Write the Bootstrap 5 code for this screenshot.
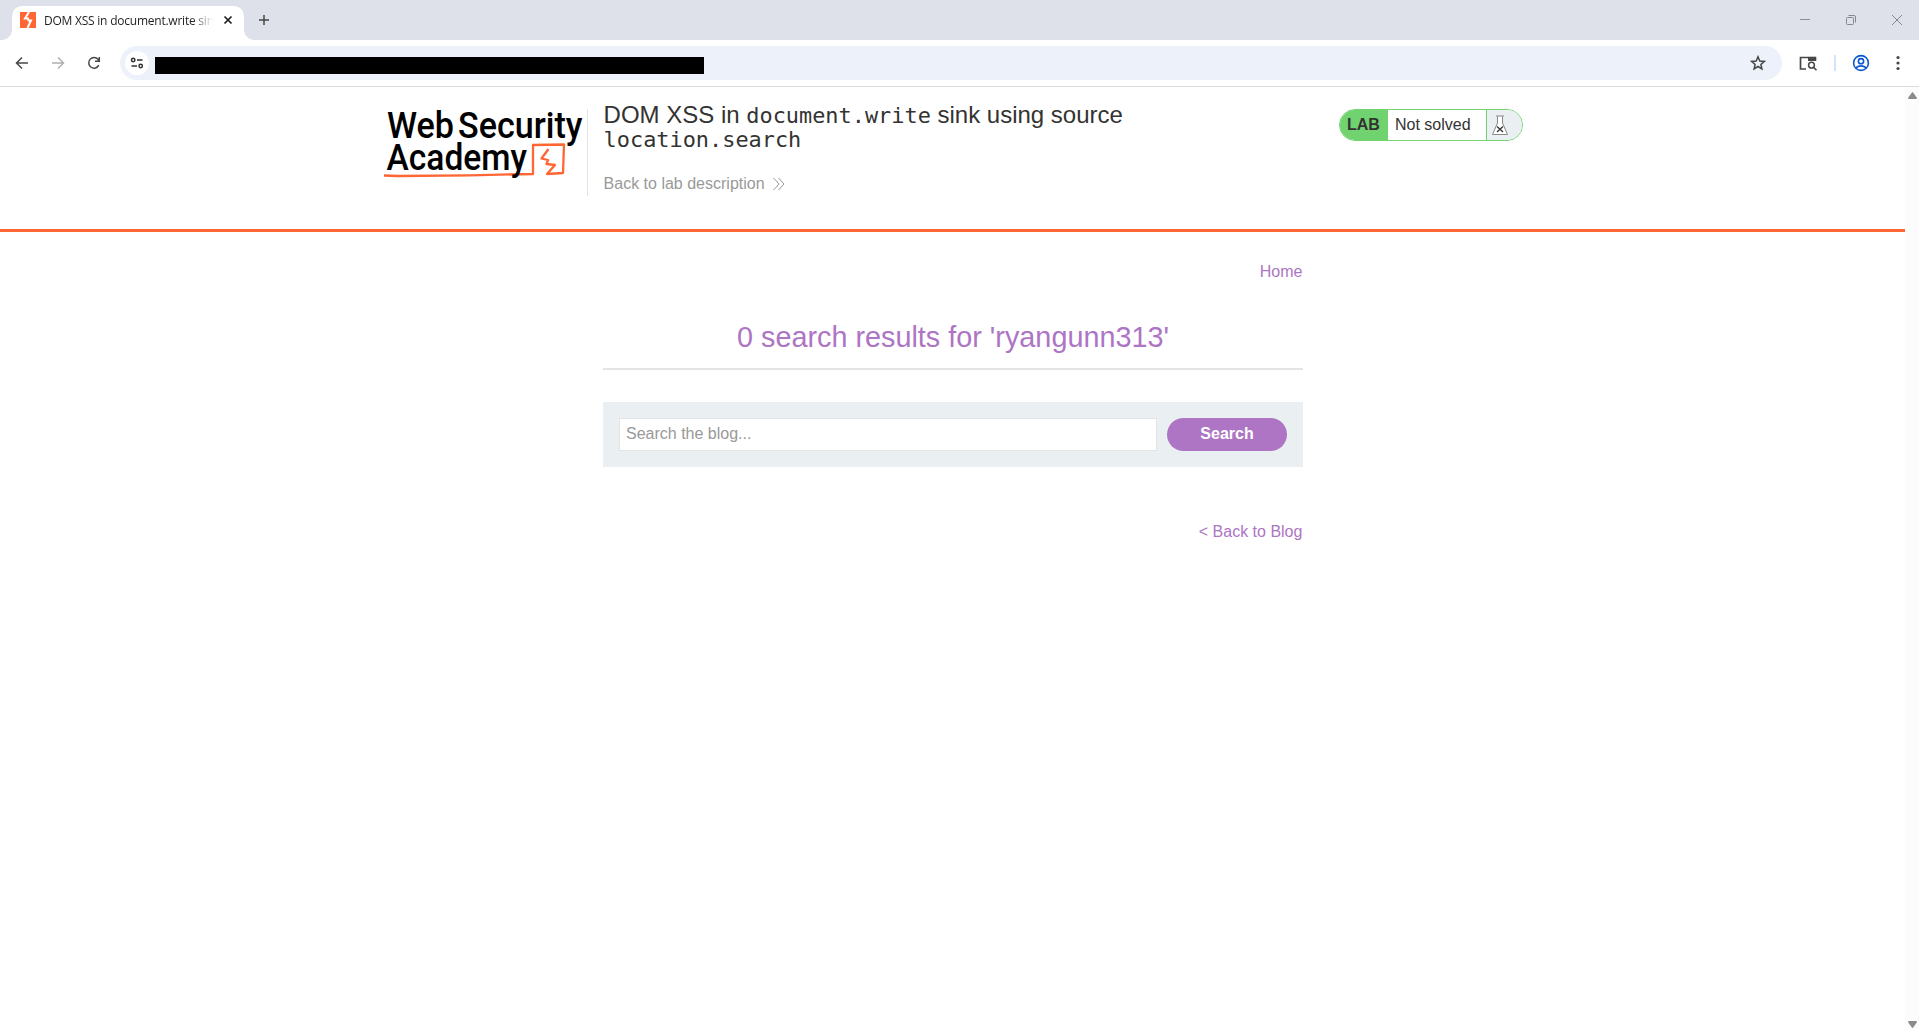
<!DOCTYPE html>
<html lang="en">
<head>
<meta charset="utf-8">
<title>DOM XSS in document.write sink using source location.search</title>
<link href="https://cdn.jsdelivr.net/npm/bootstrap@5.3.0/dist/css/bootstrap.min.css" rel="stylesheet">
<style>
body{font-family:"Liberation Sans",Arial,sans-serif;font-size:16px;line-height:24px;color:#333332;background:#fff;height:1029px}
svg{display:block;flex:none}
.tabstrip{height:40px;background:#dee1e9;padding:6px 0 0 12px}
.browser-tab{width:232px;height:34px;background:#fff;border-radius:10px 10px 0 0;padding:0 10px 6px 8px}
.browser-tab::before,.browser-tab::after{content:"";position:absolute;bottom:0;width:10px;height:10px}
.browser-tab::before{left:-10px;background:radial-gradient(circle at 0 0,transparent 9.5px,#fff 10px)}
.browser-tab::after{right:-10px;background:radial-gradient(circle at 100% 0,transparent 9.5px,#fff 10px)}
.tab-title{font:12px/18px "Open Sans","Noto Sans",sans-serif;letter-spacing:-.23px;color:#1f1f1f;width:169px;margin-left:8px;padding-top:1px;-webkit-mask-image:linear-gradient(90deg,#000 148px,transparent 169px);mask-image:linear-gradient(90deg,#000 148px,transparent 169px)}
.new-tab{margin:8px 0 0 14px}
.window-controls{gap:34px;padding:8px 16px 0 0}
.toolbar{height:47px;border-bottom:1px solid #dcdcdc;padding:0 13px 1px 14px}
.nav-buttons{gap:20px;width:106px}
.omnibox{height:34px;width:1662px;border-radius:17px;background:#ecf1fa;padding:0 16px 0 5px}
.site-info{width:24px;height:24px;background:#fff}
.address-text{width:549px;height:17px;background:#000;margin:5px 0 0 6px;align-self:center}
.viewport{height:942px}
.scroll-track{width:14px;background:#fcfcfc;padding:5px 2px 1px 3px}
.lab-header{height:145px;border-bottom:3px solid #ff6633;padding:15px 0 0 380px}
.brand-logo{width:208px;height:87px;border-right:1px solid #e4e4e4;margin-top:7px}
.brand-logo svg{overflow:visible}
.brand-logo text{font-family:Roboto,sans-serif;font-weight:500;font-size:37.5px;fill:#000}
.lab-title{width:560px;margin-left:15.6px;padding-top:1px}
.lab-title h2{font-size:24px;line-height:24px;margin:0 0 20.500px;font-weight:400;white-space:nowrap}
.lab-title code{font:21.9px/20px "DejaVu Sans Mono",monospace;color:inherit}
.back-lab{color:#999;gap:7px}
.lab-status{height:32px;width:184px;margin:7px 0 0 175.4px;border:1px solid #72d572;border-radius:16px;overflow:hidden;line-height:30px}
.status-tag{width:48px;background:#70d36f;font-weight:700;padding-left:7px}
.status-value{width:99px;padding-left:7px;border-right:1px solid #70d36f}
.status-flask{background:#eaeff2;padding:5px 0 0 4px}
.blog-section{width:700px;margin-left:603px;padding-top:28px}
.blog-section a,.blog-section h1{color:#ad75c3;text-decoration:none}
.blog-nav{padding-right:.6px}
.blog-section h1{font-size:28.8px;line-height:34px;font-weight:400;text-align:center;margin:36px 0 0;padding-bottom:14px;border-bottom:2px solid #e4e4e4}
.search-panel{height:65px;margin-top:32px;padding:0 16px;background:#eaeff2;gap:10px}
.search-panel .form-control{height:33px;width:538px;flex:none;border:1px solid #e4e4e4;border-radius:0;padding:0 6px 2px;font-size:16px}
.search-panel .form-control::placeholder{color:#999;opacity:1}
.search-panel .btn{height:33px;width:120px;border-radius:17px;background:#ad75c3;color:#fff;font-weight:700;padding:0 0 2px;border:0}
.back-link{margin-top:53px}
</style>
<script src="https://cdn.jsdelivr.net/npm/bootstrap@5.3.0/dist/js/bootstrap.bundle.min.js"></script>
</head>
<body class="overflow-hidden d-flex flex-column">
<div class="tabstrip d-flex">
  <div class="browser-tab d-flex align-items-center position-relative">
    <svg width="16" height="16" viewBox="0 0 16 16"><path fill="#f63" d="M0 0h16v16H0z"/><path d="M9 0L5 6.500H8L8.500 8.500H11L7.500 16" fill="none" stroke="#fff" stroke-width="2"/></svg>
    <div class="tab-title text-nowrap overflow-hidden">DOM XSS in document.write sink</div>
    <svg class="ms-auto" width="12" height="12" viewBox="0 0 12 12"><path d="M2.500 2.500l7 7m0-7l-7 7" stroke="#1f1f1f" stroke-width="1.700"/></svg>
  </div>
  <svg class="new-tab" width="12" height="12" viewBox="0 0 12 12"><path d="M6 1v10M1 6h10" stroke="#474747" stroke-width="1.500"/></svg>
  <div class="window-controls d-flex ms-auto">
    <svg width="12" height="12"><path d="M1 5.500h10" stroke="#8c8e92"/></svg>
    <svg width="12" height="12" fill="none" stroke="#85878b"><rect x="1.500" y="3.500" width="7" height="7" rx="1"/><path d="M3.500 1.500H9q1.500 0 1.500 1.500V8.500"/></svg>
    <svg width="12" height="12"><path d="M1 1l10 10M11 1L1 11" stroke="#85878b"/></svg>
  </div>
</div>
<div class="toolbar d-flex align-items-center bg-white">
  <div class="nav-buttons d-flex">
    <svg width="16" height="16" fill="none" stroke="#474747" stroke-width="1.500"><path d="M14 8H3M8 2.500L2.500 8L8 13.500"/></svg>
    <svg width="16" height="16" fill="none" stroke="#b0b0b0" stroke-width="1.500"><path d="M2 8h11M8 2.500L13.500 8L8 13.500"/></svg>
    <svg width="16" height="16" fill="none" stroke="#474747" stroke-width="1.500"><path d="M12.800 10.200A5.300 5.300 0 1 1 12 4.300L13.300 6M13.300 2V6.200H9"/></svg>
  </div>
  <div class="omnibox d-flex align-items-center">
    <div class="site-info rounded-circle d-flex align-items-center justify-content-center"><svg width="14" height="12" fill="none" stroke="#303030" stroke-width="1.500"><circle cx="3.200" cy="3" r="1.700"/><path d="M7 3h5.500M1.500 9H7"/><circle cx="10.700" cy="9" r="1.700"/></svg></div>
    <div class="address-text"></div>
    <svg class="ms-auto" width="16" height="16" fill="none" stroke="#474747" stroke-width="1.500"><path d="M8 1.800L9.800 6L14.300 6.400L10.900 9.400L11.900 13.900L8 11.500L4.100 13.900L5.100 9.400L1.700 6.400L6.200 6Z"/></svg>
  </div>
  <svg class="ms-3" width="20" height="18" viewBox="0 0 20 18"><path d="M8 15H2.500V3.500H10" fill="none" stroke="#474747" stroke-width="1.700"/><path d="M10 2.700h8.300V7H10z" fill="#474747"/><circle cx="13.500" cy="11.200" r="2.900" fill="none" stroke="#474747" stroke-width="1.500"/><path d="M15.500 13.200l3 3" stroke="#474747" stroke-width="1.600"/></svg>
  <svg width="2" height="16" class="ms-3"><path fill="#d3e3fd" d="M0 0h2v16H0z"/></svg>
  <svg class="ms-auto me-auto" width="18" height="18" fill="none" stroke="#0b57d0" stroke-width="1.600"><circle cx="9" cy="9" r="7.400"/><circle cx="9" cy="7.200" r="2.600"/><path d="M3.700 13.900Q9 9.800 14.300 13.900"/></svg>
  <svg class="ms-1" width="16" height="16" fill="#474747"><circle cx="8" cy="2.500" r="1.600"/><circle cx="8" cy="8" r="1.600"/><circle cx="8" cy="13.500" r="1.600"/></svg>
</div>
<div class="viewport d-flex">
  <main class="flex-grow-1">
    <header class="lab-header d-flex align-items-start">
      <div class="brand-logo">
        <svg width="207" height="75" viewBox="380 109 207 75">
          <path fill="none" stroke="#f63" stroke-width="2.300" stroke-linejoin="round" d="M384 175.500L398 176L470 175.300L533 174V145L564 144.500L563 173L547 174L555 165L546.500 164L548 160L541.500 158.500L548.500 149"/>
          <text x="387" y="137.700" textLength="67" lengthAdjust="spacingAndGlyphs">Web</text>
          <text x="458" y="137.700" textLength="124.500" lengthAdjust="spacingAndGlyphs">Security</text>
          <text x="386.500" y="169.700" textLength="140.500" lengthAdjust="spacingAndGlyphs">Academy</text>
        </svg>
      </div>
      <div class="lab-title">
        <h2>DOM XSS in <code>document.write</code> sink using source<br><code>location.search</code></h2>
        <a class="back-lab d-inline-flex align-items-center text-decoration-none" href="#">Back to lab description <svg width="14" height="14" fill="none" stroke="#999"><path d="M1.500 1L7 7L1.500 13M6.500 1L12 7L6.500 13"/></svg></a>
      </div>
      <div class="lab-status d-flex">
        <div class="status-tag">LAB</div>
        <div class="status-value">Not solved</div>
        <div class="status-flask flex-grow-1"><svg width="18" height="21" fill="#fff" stroke="#888"><path d="M6.500 1.500V8L1.500 19.500H16.500L11.500 8V1.500M5 1H13"/><path d="M6 11.500L12 17M12 11.500L6 17" stroke="#333" stroke-width="1.300"/></svg></div>
      </div>
    </header>
    <section class="blog-section">
      <div class="blog-nav text-end"><a href="#">Home</a></div>
      <h1>0 search results for 'ryangunn313'</h1>
      <form class="search-panel d-flex align-items-center">
        <input class="form-control" placeholder="Search the blog...">
        <button class="btn" type="button">Search</button>
      </form>
      <div class="blog-nav back-link text-end"><a href="#">&lt; Back to Blog</a></div>
    </section>
  </main>
  <div class="scroll-track d-flex flex-column justify-content-between">
    <svg width="9" height="8"><path fill="#8b8b8b" d="M4.500 0Q5 0 9 6Q9 7 8 7H1Q0 7 0 6Q4 0 4.500 0"/></svg>
    <svg width="9" height="8"><path fill="#8b8b8b" d="M1 1H8Q9 1 9 2Q5 8 4.500 8Q4 8 0 2Q0 1 1 1"/></svg>
  </div>
</div>
</body>
</html>
